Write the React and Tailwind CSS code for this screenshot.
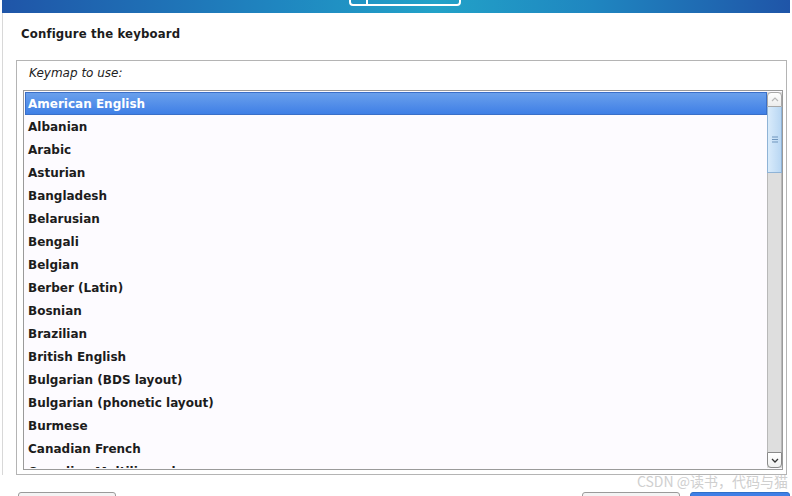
import React from 'react';

const keymaps = [
  'American English',
  'Albanian',
  'Arabic',
  'Asturian',
  'Bangladesh',
  'Belarusian',
  'Bengali',
  'Belgian',
  'Berber (Latin)',
  'Bosnian',
  'Brazilian',
  'British English',
  'Bulgarian (BDS layout)',
  'Bulgarian (phonetic layout)',
  'Burmese',
  'Canadian French',
  'Canadian Multilingual',
];

const Banner = () => (
  <div className="relative h-[13px] bg-[linear-gradient(90deg,#1f55a8_0%,#1f86c0_35%,#22a2c8_55%,#1f86c0_75%,#1f55a8_100%)]">
    <svg className="absolute left-[345px] top-0" width="116" height="7" viewBox="0 0 116 7">
      <path d="M3 0 V2 Q3 5 6 5 H110 Q113 5 113 2 V0" fill="none" stroke="#fff" strokeWidth="2" />
      <path d="M20 0 V4" stroke="#fff" strokeWidth="2" />
    </svg>
  </div>
);

const Scrollbar = () => (
  <div className="flex w-[15px] flex-col bg-[#dedede]">
    <div className="flex h-[15px] items-center justify-center rounded-t-[4px] border border-[#a8a8a8] bg-[linear-gradient(#ffffff,#ececec)]">
      <svg width="8" height="5" viewBox="0 0 8 5">
        <path d="M1 4 L4 1 L7 4" fill="none" stroke="#b8b8b8" strokeWidth="1.2" />
      </svg>
    </div>
    <div className="flex h-[66px] items-center justify-center border border-t-0 border-[#8fb3d6] bg-[linear-gradient(90deg,#d9ebfb,#b9d7f3)]">
      <svg width="6" height="7" viewBox="0 0 6 7">
        <path d="M0 1 H6 M0 3.5 H6 M0 6 H6" stroke="#6f95bd" strokeWidth="1" />
      </svg>
    </div>
    <div className="flex-1 border-x border-[#b8b8b8]" />
    <div className="flex h-[16px] items-center justify-center rounded-b-[4px] border border-[#8a8a8a] bg-[linear-gradient(#ffffff,#f0f0f0)]">
      <svg width="8" height="5" viewBox="0 0 8 5">
        <path d="M1 1 L4 4 L7 1" fill="none" stroke="#333" strokeWidth="1.3" />
      </svg>
    </div>
  </div>
);

export default function App() {
  return (
    <div className="relative h-[496px] w-[792px] overflow-hidden bg-white font-['DejaVu_Sans',sans-serif] text-[#1c1c1c]">
      <div className="ml-[2px] mr-[2px]">
        <Banner />
      </div>
      <div className="ml-[2px] border-l border-[#d8d8d8] pl-[17px] pt-[13px]">
        <h1 className="h-[16px] pl-[1px] font-['DejaVu_Sans_Condensed','DejaVu_Sans',sans-serif] text-[13px] font-bold leading-[16px] tracking-[0.15px]">
          Configure the keyboard
        </h1>
      </div>
      <div className="ml-[2px] border-l border-[#d8d8d8] pl-[13px] pt-[18px]">
        <div className="h-[415px] w-[771px] border border-[#b4b4b4] px-[6px]">
          <div className="h-[29px] pl-[6px] pt-[5px] text-[12px] italic leading-[14px] text-[#222]">Keymap to use:</div>
          <div className="flex h-[380px] w-[760px] border border-[#9a9a9a] bg-[#fdfbff] pl-[1px] pt-[1px] pb-[1px]">
            <div className="flex-1 overflow-hidden">
              {keymaps.map((k, i) => (
                <div
                  key={k}
                  className={
                    i === 0
                      ? 'h-[23px] border border-[#3a6fc8] bg-[linear-gradient(#6aa0ec,#3f7fe6)] pl-[2px] pt-[1px] text-[12px] font-bold leading-[20px] text-white'
                      : 'h-[23px] pl-[3px] pt-[1px] text-[12px] font-bold leading-[22px]'
                  }
                >
                  {k}
                </div>
              ))}
            </div>
            <Scrollbar />
          </div>
        </div>
      </div>
      <div className="absolute right-[4px] top-[473px] font-['Noto_Sans_CJK_SC',sans-serif] text-[14px] leading-[17px] text-[#cfcfcf]">
        CSDN @读书，代码与猫
      </div>
      <div className="flex justify-between pl-[18px] pr-[2px] pt-[17px]">
        <div className="h-[10px] w-[98px] rounded-t-[3px] border border-[#9a9a9a] bg-[#f4f4f4]" />
        <div className="flex gap-[10px]">
          <div className="h-[10px] w-[98px] rounded-t-[3px] border border-[#9a9a9a] bg-[#f4f4f4]" />
          <div className="h-[10px] w-[100px] rounded-t-[3px] border border-[#2f6fc8] bg-[#3f7fe6]" />
        </div>
      </div>
    </div>
  );
}
